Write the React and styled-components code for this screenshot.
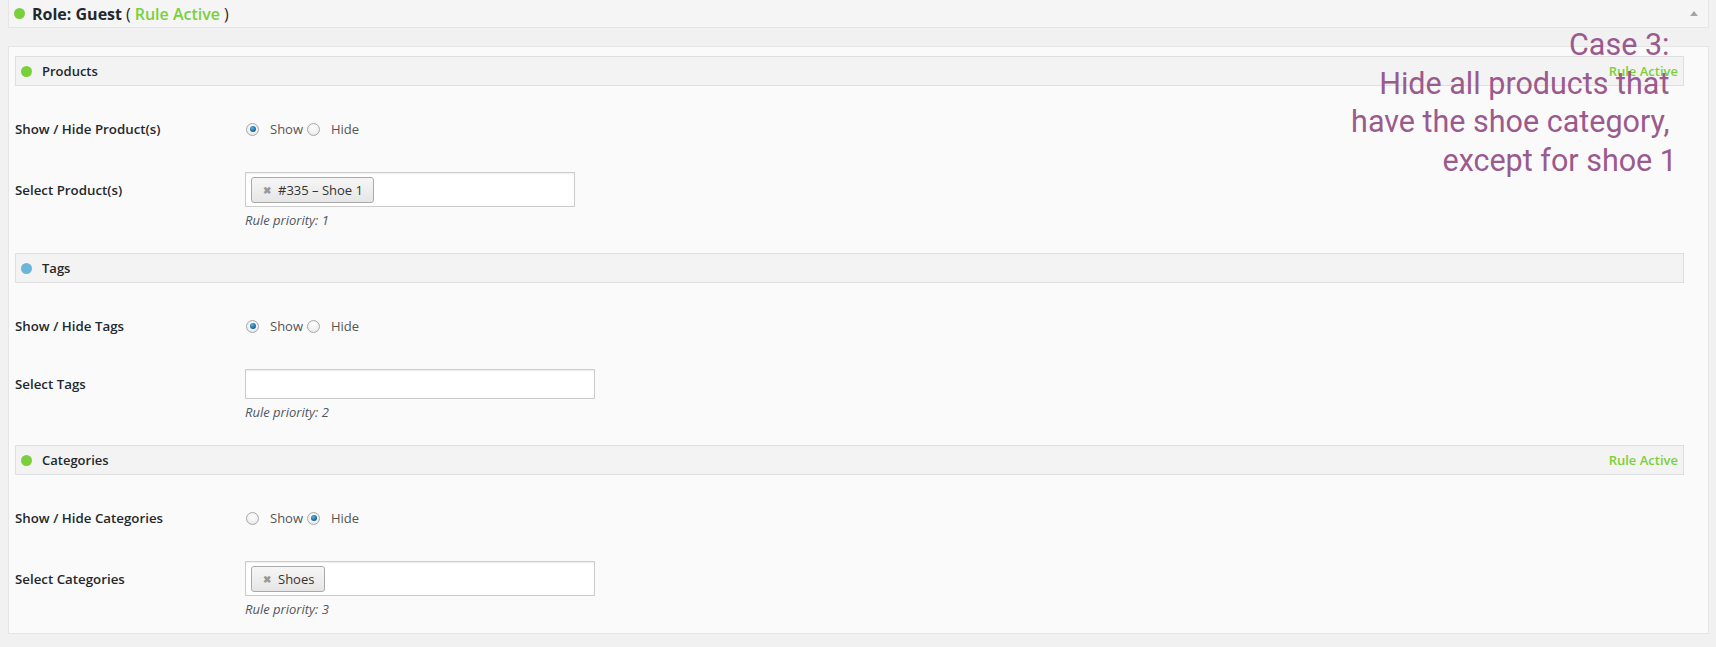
import React from 'react'
import styled, { createGlobalStyle } from 'styled-components'

const GlobalStyle = createGlobalStyle`
  body {
    margin: 0;
    background: #f1f1f1;
    font-family: "Open Sans", "Noto Sans", sans-serif;
    color: #23282d;
  }
`

const Page = styled.div`
  position: relative;
  padding: 0 7px 14px 8px;
`

const TopBar = styled.div`
  display: flex;
  align-items: center;
  height: 27px;
  border: 1px solid #e5e5e5;
  border-top: none;
  background: #f5f5f5;
  padding: 0 10px 0 5px;
`

const TopTitle = styled.div`
  flex: 1;
  display: flex;
  align-items: center;
  font-size: 16px;
  font-weight: 700;
  color: #23282d;
`

const Dot = styled.span`
  display: inline-block;
  width: ${p => p.size || 11}px;
  height: ${p => p.size || 11}px;
  border-radius: 50%;
  background: ${p => p.color};
  margin-right: ${p => p.gap || 10}px;
  flex-shrink: 0;
`

const Paren = styled.span`
  font-weight: 400;
  margin: 0 4px;
`

const ActiveText = styled.span`
  color: #7ad03a;
  font-weight: ${p => p.weight || 600};
  font-size: ${p => p.size || 16}px;
`

const Caret = styled.span`
  width: 0;
  height: 0;
  border-left: 4px solid transparent;
  border-right: 4px solid transparent;
  border-bottom: 5px solid #a0a5aa;
`

const Panel = styled.div`
  margin-top: 18px;
  border: 1px solid #e5e5e5;
  background: #fafafa;
  padding: 9px 24px 16px 6px;
`

const Section = styled.div`
  & + & {
    margin-top: 25px;
  }
`

const SectionHead = styled.div`
  display: flex;
  align-items: center;
  height: 28px;
  border: 1px solid #dfdfdf;
  background: #f3f3f3;
  padding: 0 5px 0 5px;
  font-size: 13px;
  font-weight: 600;
`

const HeadTitle = styled.span`
  flex: 1;
  color: #23282d;
`

const Row = styled.div`
  display: grid;
  grid-template-columns: 230px 1fr;
  align-items: center;
  margin-top: ${p => (p.tight ? 0 : 33)}px;
`

const Label = styled.div`
  font-size: 13.3px;
  font-weight: 600;
  color: #23282d;
  line-height: 20px;
`

const Radios = styled.div`
  display: flex;
  align-items: center;
  height: 20px;
  font-size: 13px;
  color: #555;
`

const RadioCircle = styled.span`
  position: relative;
  width: 11px;
  height: 11px;
  border-radius: 50%;
  border: 1px solid #a9a9a9;
  background: radial-gradient(circle at 50% 35%, #ffffff 0%, #ececec 70%, #dadada 100%);
  margin: 0 11px 0 1px;
  &::after {
    content: '';
    display: ${p => (p.checked ? 'block' : 'none')};
    position: absolute;
    left: 2.5px;
    top: 2.5px;
    width: 6px;
    height: 6px;
    border-radius: 50%;
    background: radial-gradient(circle at 40% 35%, #5fb6e6 0%, #1b6fa3 55%, #0c3c5e 100%);
  }
`

const RadioText = styled.span`
  margin-right: 3px;
`

const Field = styled.div`
  display: flex;
  align-items: center;
  box-sizing: border-box;
  width: ${p => p.width}px;
  min-height: 30px;
  padding: 4px 5px 3px;
  border: 1px solid #cccccc;
  background: #fff;
  box-shadow: inset 0 1px 2px rgba(0, 0, 0, 0.07);
`

const Chip = styled.span`
  display: inline-flex;
  align-items: center;
  height: 24px;
  padding: 0 10px 0 11px;
  border: 1px solid #aaa;
  border-radius: 3px;
  background: linear-gradient(#f6f6f6, #e6e6e6);
  font-size: 13px;
  color: #333;
`

const ChipX = styled.span`
  font-size: 10px;
  font-weight: 700;
  color: #999;
  margin-right: 7px;
`

const Priority = styled.div`
  margin-top: 5px;
  font-size: 13px;
  font-style: italic;
  color: #50575e;
  line-height: 16px;
`

const Note = styled.div`
  position: absolute;
  right: 39px;
  top: 26px;
  text-align: right;
  font-family: Roboto, "Liberation Sans", sans-serif;
  font-size: 30.5px;
  line-height: 38.5px;
  color: #9b5a8e;
`

const NoteLine = styled.div`
  white-space: pre;
`

const sections = [
  {
    title: 'Products',
    dot: '#7ad03a',
    active: true,
    toggleLabel: 'Show / Hide Product(s)',
    show: true,
    selectLabel: 'Select Product(s)',
    width: 330,
    chip: '#335 – Shoe 1',
    priority: 1,
  },
  {
    title: 'Tags',
    dot: '#6bb5da',
    active: false,
    toggleLabel: 'Show / Hide Tags',
    show: true,
    selectLabel: 'Select Tags',
    width: 350,
    chip: null,
    priority: 2,
  },
  {
    title: 'Categories',
    dot: '#7ad03a',
    active: true,
    toggleLabel: 'Show / Hide Categories',
    show: false,
    selectLabel: 'Select Categories',
    width: 350,
    chip: 'Shoes',
    priority: 3,
  },
]

const noteLines = ['Case 3: ', 'Hide all products that ', 'have the shoe category, ', 'except for shoe 1']

const RuleSection = ({ s }) => (
  <Section>
    <SectionHead>
      <Dot color={s.dot} size={11} gap={10} />
      <HeadTitle>{s.title}</HeadTitle>
      {s.active && <ActiveText size={13} weight={600}>Rule Active</ActiveText>}
    </SectionHead>
    <Row>
      <Label>{s.toggleLabel}</Label>
      <Radios>
        <RadioCircle checked={s.show} />
        <RadioText>Show</RadioText>
        <RadioCircle checked={!s.show} />
        <RadioText>Hide</RadioText>
      </Radios>
    </Row>
    <Row>
      <Label>{s.selectLabel}</Label>
      <Field width={s.width}>
        {s.chip && (
          <Chip>
            <ChipX>✖</ChipX>
            {s.chip}
          </Chip>
        )}
      </Field>
    </Row>
    <Row tight>
      <span />
      <Priority>Rule priority: {s.priority}</Priority>
    </Row>
  </Section>
)

const App = () => (
  <Page>
    <GlobalStyle />
    <TopBar>
      <TopTitle>
        <Dot color="#7ad03a" size={11} gap={7} />
        Role: Guest
        <Paren>(</Paren>
        <ActiveText>Rule Active</ActiveText>
        <Paren>)</Paren>
      </TopTitle>
      <Caret />
    </TopBar>
    <Panel>
      {sections.map(s => (
        <RuleSection key={s.title} s={s} />
      ))}
    </Panel>
    <Note>
      {noteLines.map(line => (
        <NoteLine key={line}>{line}</NoteLine>
      ))}
    </Note>
  </Page>
)

export default App
